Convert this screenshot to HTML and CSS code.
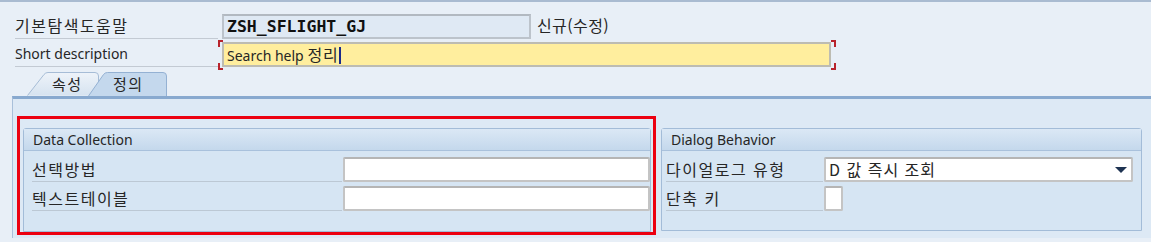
FILE: index.html
```html
<!DOCTYPE html>
<html lang="ko">
<head>
<meta charset="utf-8">
<link rel="stylesheet" href="styles.css">
</head>
<body>
<div class="top">
  <div class="frow r1">
    <div class="lbl"><span class="ko">기본탐색도움말</span></div>
    <div class="inp ro mono">ZSH_SFLIGHT_GJ</div>
    <div class="after"><span class="ko">신규(수정)</span></div>
  </div>
  <div class="frow r2">
    <div class="lbl">Short description</div>
    <div class="req">
      <div class="inp yel">Search help <span class="ko">정리</span><span class="caret"></span></div>
    </div>
  </div>
  <div class="tabs">
    <div class="tab t1">
      <svg class="tabbg" width="73" height="24" viewBox="0 0 73 24"><defs><linearGradient id="g1" x1="0" y1="0" x2="0" y2="1"><stop offset="0" stop-color="#eef3f9"/><stop offset="1" stop-color="#d6e3f0"/></linearGradient></defs><path d="M0.5 23.5 L17 2.5 Q18.5 0.5 21 0.5 L68 0.5 Q71.5 0.5 71.5 4 L71.5 23.5" fill="url(#g1)" stroke="#a6bcd6"/></svg>
      <span class="ko tk">속성</span>
    </div>
    <div class="tab t2">
      <svg class="tabbg" width="80" height="24" viewBox="0 0 80 24"><path d="M0.5 24 L15.5 2.5 Q17 0.5 19.5 0.5 L75 0.5 Q78.5 0.5 78.5 4 L78.5 24" fill="#c4d8ed" stroke="#94b1d3"/></svg>
      <span class="ko tk">정의</span>
    </div>
  </div>
</div>
<div class="panel">
  <div class="groups">
    <div class="marked">
      <section class="group dc">
        <div class="ghead">Data Collection</div>
        <div class="gbody">
          <div class="grow"><div class="glbl"><span class="ko">선택방법</span></div><div class="ginp w308"></div></div>
          <div class="grow"><div class="glbl"><span class="ko">텍스트테이블</span></div><div class="ginp w308"></div></div>
        </div>
      </section>
      <div class="redbox"></div>
    </div>
    <section class="group db">
      <div class="ghead">Dialog Behavior</div>
      <div class="gbody">
        <div class="grow"><div class="glbl l2"><span class="ko">다이얼로그 유형</span></div><div class="ginp sel"><span class="ko">D 값 즉시 조회</span><span class="arrow"></span></div></div>
        <div class="grow"><div class="glbl l2"><span class="ko">단축 키</span></div><div class="ginp small"></div></div>
      </div>
    </section>
  </div>
</div>
</body>
</html>
```
FILE: styles.css
```css
* { box-sizing: border-box; }
html, body { margin: 0; padding: 0; }
body {
  width: 1151px;
  height: 242px;
  overflow: hidden;
  background: #e8eff7;
  border-top: 2px solid #a9bbd1;
  font-family: "Noto Sans", "Noto Sans CJK KR", sans-serif;
  font-size: 14px;
  color: #262626;
}
.ko { font-family: "Noto Sans CJK KR", sans-serif; font-size: 16px; letter-spacing: 1.5px; }
.top { padding: 11px 0 0 15px; }
.frow { display: flex; align-items: center; height: 26px; }
.r2 { margin-top: 2px; }
.lbl {
  width: 203px;
  height: 26px;
  line-height: 25px;
  border-bottom: 1px solid #c3cad3;
  white-space: nowrap;
}
.inp {
  height: 25px;
  margin-left: 4px;
  border: 2px solid #bcc3cb;
  border-top-color: #b2b9c1;
  line-height: 21px;
  padding-left: 3px;
  white-space: nowrap;
}
.ro { width: 309px; background: #dfe9f4; }
.mono { font-family: "DejaVu Sans Mono", monospace; font-weight: bold; font-size: 16.5px; color: #111; }
.after { margin-left: 6px; line-height: 25px; }
.after .ko { letter-spacing: 0.4px; }
.req { position: relative; margin-left: 4px; padding-right: 3px; }
.req .inp { margin-left: 0; width: 609px; background: #ffee9e; border-color: #bdbcb2; }
.req .ko { letter-spacing: 1px; }
.req::before, .req::after {
  content: "";
  position: absolute;
  top: -2px;
  width: 5px;
  height: 30px;
  background:
    linear-gradient(#b8232c, #b8232c) 0 0 / 100% 2px no-repeat,
    linear-gradient(#b8232c, #b8232c) 0 100% / 100% 2px no-repeat,
    linear-gradient(#b8232c, #b8232c) var(--vx) 0 / 2px 7px no-repeat,
    linear-gradient(#b8232c, #b8232c) var(--vx) 100% / 2px 7px no-repeat;
}
.req::before { left: -4px; --vx: 0; }
.req::after { right: -2px; --vx: 100%; }
.caret { display: inline-block; width: 2px; height: 17px; background: #1a2a8a; vertical-align: -3px; margin-left: 0; }

.tabs { display: flex; height: 24px; margin-top: 5px; padding-left: 12px; }
.tab { position: relative; height: 24px; }
.tab span { position: relative; display: block; line-height: 24px; }
.tab .tk { font-size: 15px; letter-spacing: 1.5px; }
.tabbg { position: absolute; left: 0; top: 0; }
.t1 { width: 73px; }
.t1 span { padding-left: 25px; }
.t2 { width: 80px; margin-left: -12px; }
.t2 span { padding-left: 25px; }

.panel {
  margin-left: 12px;
  height: 142px;
  background: #dde9f5;
  border-top: 3px solid #88a9cf;
  border-left: 1px solid #a9c0da;
  padding: 29px 0 0 10px;
}
.groups { display: flex; gap: 10px; align-items: flex-start; }
.marked { position: relative; }
.redbox {
  position: absolute;
  left: -6px; top: -12px; right: -5px; bottom: -3px;
  border: 3px solid #ec0010;
  pointer-events: none;
}
.group {
  border: 1px solid #a3bcd8;
  border-radius: 3px 3px 0 0;
  background: #d6e5f3;
}
.dc { width: 628px; height: 104px; }
.db { width: 481px; height: 103px; }
.ghead {
  height: 22px;
  line-height: 21px;
  padding-left: 9px;
  background: linear-gradient(#dbe8f5, #c4d8ec);
  border-bottom: 1px solid #a9c1dc;
}
.gbody { padding: 6px 0 0 8px; }
.db .gbody { padding-left: 4px; }
.grow { display: flex; height: 25px; margin-bottom: 4px; }
.glbl {
  width: 310px;
  height: 25px;
  line-height: 24px;
  border-bottom: 1px solid #bcc8d4;
  white-space: nowrap;
}
.glbl.l2 { width: 157px; }
.ginp {
  height: 25px;
  margin-left: 1px;
  background: #fff;
  border: 2px solid #c4c4c4;
  border-top-color: #b5b5b5;
  border-radius: 2px;
}
.w308 { width: 308px; }
.sel { width: 309px; position: relative; line-height: 21px; padding-left: 3px; white-space: nowrap; }
.sel .ko { letter-spacing: 1px; }
.small { width: 19px; }
.arrow {
  position: absolute;
  right: 4px; top: 8px;
  border-left: 6px solid transparent;
  border-right: 6px solid transparent;
  border-top: 6px solid #1e3352;
}
```
